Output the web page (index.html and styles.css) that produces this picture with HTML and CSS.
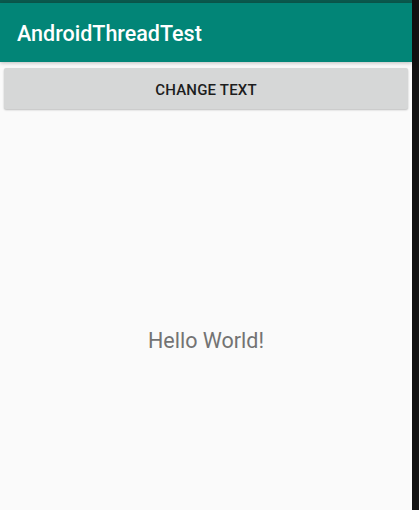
FILE: index.html
```html
<!DOCTYPE html>
<html>
<head>
<meta charset="utf-8">
<link rel="stylesheet" href="styles.css">
</head>
<body>
<div class="screen">
  <div class="status"></div>
  <header class="appbar"><span class="title">AndroidThreadTest</span></header>
  <main class="content">
    <div class="btnwrap"><button class="btn">CHANGE TEXT</button></div>
    <div class="hello">Hello World!</div>
  </main>
</div>
<div class="edge"></div>
</body>
</html>
```
FILE: styles.css
```css
html, body { margin: 0; padding: 0; height: 100%; }
body { display: flex; background: #121212; font-family: Roboto, "Noto Sans", sans-serif; overflow: hidden; }
.screen { width: 412px; height: 510px; display: flex; flex-direction: column; background: #fafafa; }
.edge { flex: 1; background: #121212; }
.status { height: 3px; background: #0b5a4e; }
.appbar { height: 59px; background: #028577; display: flex; align-items: center; padding-left: 17px; padding-top: 2px; box-sizing: border-box; box-shadow: 0 1px 4px rgba(0,0,0,0.25); position: relative; z-index: 1; }
.title { color: #fff; font-size: 21.5px; font-weight: 500; }
.content { flex: 1; display: flex; flex-direction: column; }
.btnwrap { padding: 6px 4px 0 4px; }
.btn { width: 100%; height: 41px; padding-top: 3px; border: none; border-radius: 2px; background: #d6d7d7; box-shadow: 0 1px 2px rgba(0,0,0,0.25); font-family: Roboto, sans-serif; font-size: 15px; font-weight: 500; color: #1d1d1d; letter-spacing: 0.2px; }
.hello { flex: 1; display: flex; align-items: center; justify-content: center; font-size: 21.5px; color: #737373; padding-top: 62px; }
```
